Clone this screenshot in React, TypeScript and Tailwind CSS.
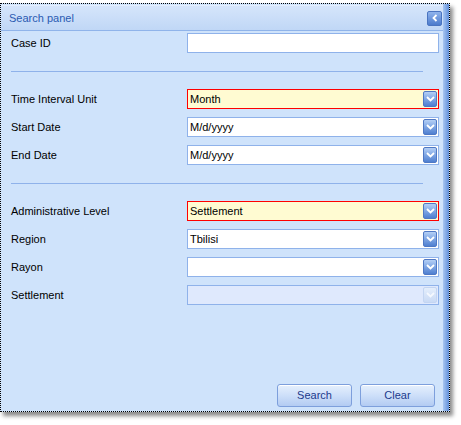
import type { ReactNode } from 'react'

const font = { fontFamily: '"Liberation Sans", Arial, sans-serif' }

function Chevron({ disabled }: { disabled?: boolean }) {
  return (
    <span
      className={
        'absolute right-[1px] top-[1px] w-[14px] h-[16px] rounded-[2px] flex items-center justify-center ' +
        (disabled
          ? 'bg-gradient-to-b from-[#e4eefc] to-[#c9daf5] border border-[#c3d5f2]'
          : 'bg-gradient-to-b from-[#b4cff5] via-[#7fa6e4] to-[#4f7fd0] border border-[#4f78c4]')
      }
    >
      <svg width="9" height="6" viewBox="0 0 9 6">
        <path
          d="M1 1 L4.5 4.5 L8 1"
          fill="none"
          stroke={disabled ? '#f4f8fe' : '#ffffff'}
          strokeWidth="1.8"
        />
      </svg>
    </span>
  )
}

interface FieldProps {
  value?: string
  required?: boolean
  disabled?: boolean
  combo?: boolean
}

function Field({ value = '', required, disabled, combo = true }: FieldProps) {
  let box = 'bg-white border-[#8fb2ea]'
  if (required) box = 'bg-[#fffbd2] border-[#ff0000]'
  if (disabled) box = 'bg-[#dfe9fd] border-[#8fb2ea]'
  return (
    <div className={'relative w-[252px] h-[20px] border ' + box}>
      <span className="absolute left-[2px] top-[2px] text-[11px] leading-[14px] text-black">{value}</span>
      {combo && <Chevron disabled={disabled} />}
    </div>
  )
}

function Row({ label, children }: { label: string; children: ReactNode }) {
  return (
    <div className="flex items-center h-[20px]">
      <span className="w-[186px] shrink-0 pl-[10px] text-[11px] text-black">{label}</span>
      {children}
    </div>
  )
}

function Button({ children }: { children: ReactNode }) {
  return (
    <button className="w-[75px] h-[23px] rounded-[3px] border border-[#7d9fdc] bg-gradient-to-b from-[#e6f0fd] via-[#cddff9] to-[#b3cbf2] text-[11px] text-[#1c3a8c] shadow-[inset_0_1px_0_#ffffff]">
      {children}
    </button>
  )
}

export default function App() {
  return (
    <div className="w-[461px] h-[425px] bg-white" style={font}>
      <div className="pt-[3px]">
        <div className="w-[450px] h-[409px] flex border-t border-r border-b border-dotted border-black border-l-[1px] border-l-black shadow-[3px_4px_4px_rgba(0,0,0,0.45)] bg-[#cfe3fb]">
          <div className="flex-1 flex flex-col">
            <div className="h-[26px] mt-[1px] border-t border-[#e4eefc] border-b border-b-[#90b4ea] bg-gradient-to-b from-[#d5e5fb] to-[#c0d7f6] flex items-center justify-between pl-[8px] pr-[1px]">
              <span className="text-[11px] text-[#2a5bb2]">Search panel</span>
              <span className="w-[15px] h-[15px] rounded-[2px] bg-gradient-to-b from-[#8fb3ec] to-[#4c7bcc] border border-[#4a74c0] flex items-center justify-center">
                <svg width="6" height="8" viewBox="0 0 6 8">
                  <path d="M4.5 1 L1.5 4 L4.5 7" fill="none" stroke="#ffffff" strokeWidth="1.8" />
                </svg>
              </span>
            </div>
            <div className="flex flex-col pt-[2px]">
              <Row label="Case ID">
                <Field combo={false} />
              </Row>
              <div className="ml-[10px] mt-[18px] w-[412px] h-px bg-[#8fb2ea]" />
              <div className="flex flex-col gap-[8px] mt-[17px]">
                <Row label="Time Interval Unit">
                  <Field value="Month" required />
                </Row>
                <Row label="Start Date">
                  <Field value="M/d/yyyy" />
                </Row>
                <Row label="End Date">
                  <Field value="M/d/yyyy" />
                </Row>
              </div>
              <div className="ml-[10px] mt-[18px] w-[412px] h-px bg-[#8fb2ea]" />
              <div className="flex flex-col gap-[8px] mt-[17px]">
                <Row label="Administrative Level">
                  <Field value="Settlement" required />
                </Row>
                <Row label="Region">
                  <Field value="Tbilisi" />
                </Row>
                <Row label="Rayon">
                  <Field />
                </Row>
                <Row label="Settlement">
                  <Field disabled />
                </Row>
              </div>
              <div className="flex justify-end gap-[8px] mt-[79px] pr-[8px]">
                <Button>Search</Button>
                <Button>Clear</Button>
              </div>
            </div>
          </div>
          <div className="w-[6px] bg-gradient-to-r from-[#a8c6f1] to-[#5f8ed9]" />
        </div>
      </div>
    </div>
  )
}
